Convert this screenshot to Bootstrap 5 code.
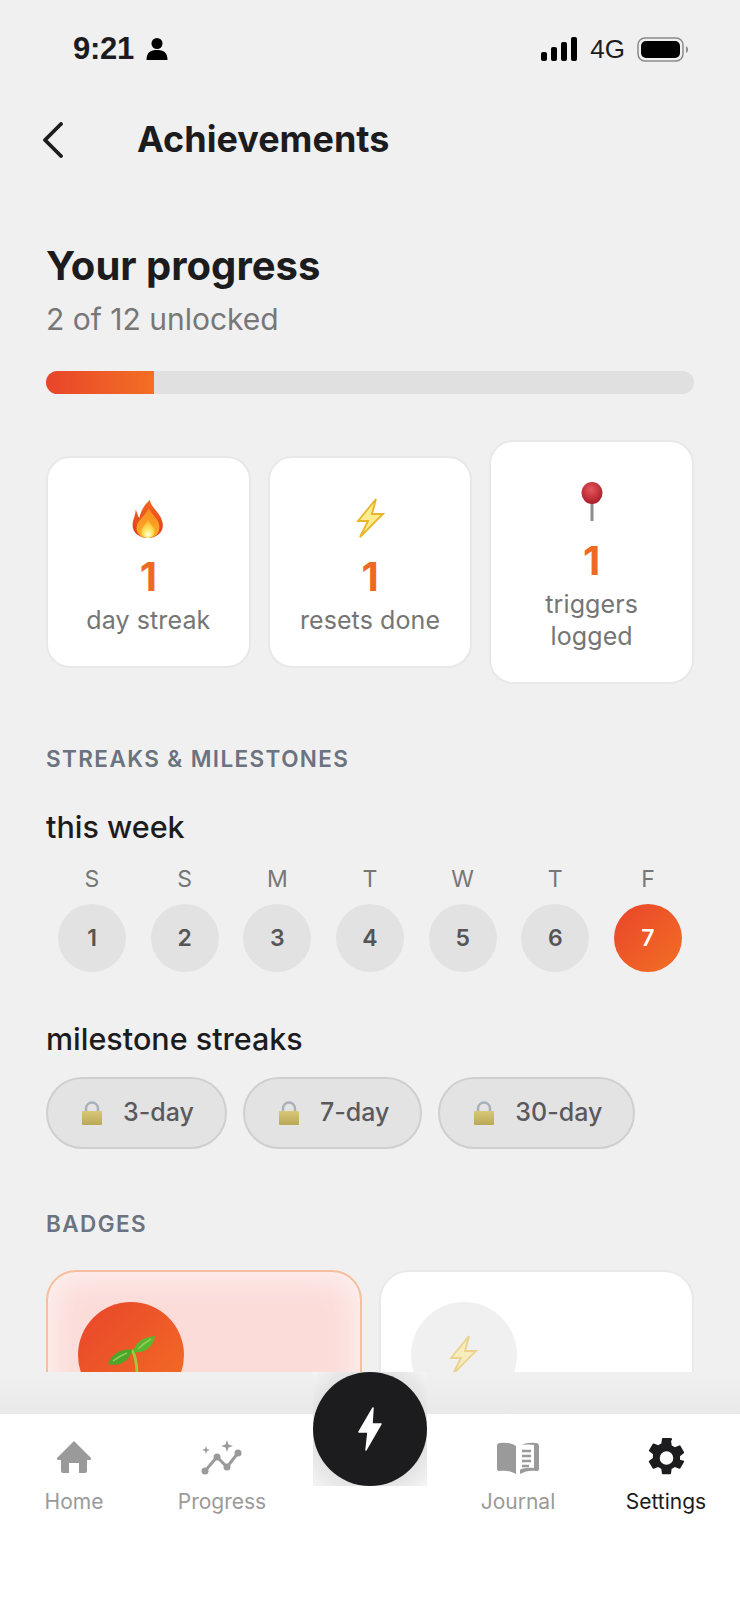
<!DOCTYPE html>
<html lang="en">
<head>
  <meta charset="UTF-8" />
  <meta name="viewport" content="width=device-width, initial-scale=1.0"/>
  <title>Achievements</title>
  <link href="https://cdn.jsdelivr.net/npm/bootstrap@5.3.3/dist/css/bootstrap.min.css" rel="stylesheet">
  <style>
    body {
      font-family: Inter, "Liberation Sans", sans-serif;
      background-color: #f0f0f0;
      color: #1c1c1e;
    }

    .app-shell { width: 740px; height: 1600px; overflow: hidden; }
    .scroll-area { height: 1372px; overflow: hidden; padding: 0 46px; }

    .status-row { height: 100px; padding: 29px 4px 0 27px; font-family: "Liberation Sans", sans-serif; }
    .status-left { gap: 12px; }
    .status-right { gap: 12px; }
    .status-time { font-size: 31px; font-weight: 700; line-height: 40px; letter-spacing: -.3px; }
    .status-net { font-size: 26px; line-height: 40px; }

    .top-row { height: 80px; margin-left: -4px; }
    .top-title { font-size: 36px; font-weight: 700; margin: 0 0 0 73px; }

    .progress-title { font-size: 40px; font-weight: 700; margin: 63px 0 0; line-height: 46px; }
    .progress-sub { font-size: 30px; color: #777; margin: 11px 0 0; line-height: 38px; }

    .prog-track { height: 23px; background: #e0e0e0; margin-top: 33px; border-radius: 12px; overflow: hidden; }
    .prog-fill { height: 100%; background: linear-gradient(90deg, #e8452b, #f36f24); }

    .stat-row { gap: 17px; margin-top: 46px; }
    .stat-box { width: 205px; background: #fff; border: 2px solid #e8e8e8; border-radius: 24px; text-align: center; padding: 40px 8px 30px; }
    .stat-num { font-size: 40px; font-weight: 700; color: #ee6a22; line-height: 44px; margin-top: 13px; }
    .stat-label { font-size: 25px; color: #757575; line-height: 32px; margin-top: 5px; letter-spacing: .1px; }
    .stat-icon { height: 44px; }

    .sect-label { font-size: 22.5px; font-weight: 600; color: #6b7280; letter-spacing: 1.4px; line-height: 28px; margin: 0; }
    .sect-first { margin-top: 61px; }
    .sect-badges { margin-top: 61px; }
    .sub-head { font-size: 30.5px; font-weight: 500; line-height: 38px; margin: 35px 0 0; }
    .sub-head-next { margin-top: 48px; }

    .week-row { margin-top: 18px; padding: 0 12px; }
    .day-col { width: 68px; text-align: center; }
    .day-letter { font-size: 23px; color: #777; line-height: 30px; margin-bottom: 10px; }
    .day-dot { width: 68px; height: 68px; border-radius: 50%; background: #e2e2e2; color: #555; font-size: 23px; font-weight: 600; }
    .day-dot-on { background: linear-gradient(135deg, #e8452b, #f36f24); color: #fff; }

    .pill-row { gap: 16px; margin-top: 19px; }
    .lock-pill { height: 72px; padding: 0 31px 0 33px; gap: 20px; background: #e3e3e3; border: 2px solid #cfcfcf; border-radius: 36px; color: #5a5a5e; font-size: 25px; font-weight: 500; }

    .badge-row { gap: 17px; margin-top: 32px; }
    .badge-box { flex: 1; height: 220px; border-radius: 30px; padding: 30px; background: #fff; border: 2px solid #e9e9e9; }
    .badge-box-on { background: #fbdcd9; border-color: #f6c09e; box-shadow: inset 0 0 30px 6px #fdf2f0; }
    .badge-disc { width: 106px; height: 106px; border-radius: 50%; background: #f0f0f0; }
    .badge-disc-on { background: linear-gradient(135deg, #e8452b, #f36f24); }

    .bottom-wrap { height: 228px; }
    .fade-band { height: 42px; background: linear-gradient(180deg, #f0f0f0, #e9e9e9); }
    .tab-bar { height: 186px; background: #fff; }
    .tab-item { width: 148px; padding-top: 24px; text-align: center; font-size: 21px; color: #9a9a9a; line-height: 28px; }
    .tab-item svg { display: block; margin: 0 auto 10px; height: 40px; }
    .tab-on { color: #1c1c1e; }

    .fab-back { position: absolute; left: 313px; top: 0; width: 114px; height: 114px; background: radial-gradient(circle, #dcdcdc 60%, #f5f5f5 100%); }
    .fab-btn { position: absolute; left: 313px; top: 0; width: 114px; height: 114px; border-radius: 50%; background: #1c1c1e; }
  </style>
</head>
<body>
  <svg width="0" height="0" class="d-block">
    <defs>
      <linearGradient id="flameOut" x1="0" y1="0" x2="0" y2="1"><stop offset="0" stop-color="#f4691f"/><stop offset="1" stop-color="#e2381c"/></linearGradient>
      <linearGradient id="flameMid" x1="0" y1="0" x2="0" y2="1"><stop offset="0" stop-color="#f98a1e"/><stop offset="1" stop-color="#fbb02a"/></linearGradient>
      <radialGradient id="flameIn" cx=".5" cy=".8" r=".75"><stop offset="0" stop-color="#fffde8"/><stop offset=".45" stop-color="#ffe45a"/><stop offset="1" stop-color="#fdb22c"/></radialGradient>
      <radialGradient id="pinHead" cx=".45" cy=".35" r=".65"><stop offset="0" stop-color="#e8565c"/><stop offset="1" stop-color="#a91c28"/></radialGradient>
      <linearGradient id="lockBody" x1="0" y1="0" x2="0" y2="1"><stop offset="0" stop-color="#d8c878"/><stop offset="1" stop-color="#b9a857"/></linearGradient>
      <symbol id="boltEmoji" viewBox="0 0 29 40">
        <path d="M20 1 L2 23 L12 23 L4 39 L27 16 L16 16 Z" fill="#fdeb8f" stroke="#e8b52a" stroke-width="1.800"/>
      </symbol>
      <symbol id="lockEmoji" viewBox="0 0 22 24">
        <path d="M5 11 V7.500 a6 6 0 0 1 12 0 V11" fill="none" stroke="#a9b0b8" stroke-width="2.400"/>
        <rect x="1" y="10" width="20" height="14" rx="1" fill="url(#lockBody)"/>
      </symbol>
    </defs>
  </svg>

  <div class="app-shell position-relative">
    <div class="scroll-area">
      <!-- status bar -->
      <div class="status-row d-flex justify-content-between align-items-start">
        <div class="status-left d-flex align-items-center">
          <span class="status-time">9:21</span>
          <svg width="22" height="24" viewBox="0 0 22 24"><circle cx="11" cy="6.500" r="5.500" fill="#000"/><path d="M0.500 23 C0.500 15 5 13 11 13 S21.500 15 21.500 23 Z" fill="#000"/></svg>
        </div>
        <div class="status-right d-flex align-items-center">
          <svg width="37" height="24" viewBox="0 0 37 24"><rect x="0" y="15" width="6" height="9" rx="2"/><rect x="10" y="10" width="6" height="14" rx="2"/><rect x="20" y="5" width="6" height="19" rx="2"/><rect x="30" y="0" width="6" height="24" rx="2"/></svg>
          <span class="status-net">4G</span>
          <svg width="53" height="25" viewBox="0 0 53 25"><rect x="1" y="1" width="45" height="23" rx="7" fill="none" stroke="#8a8a8a" stroke-width="1.500"/><rect x="4" y="4" width="39" height="17" rx="5"/><path d="M49 9 a4 4 0 0 1 0 7 Z" fill="#8a8a8a"/></svg>
        </div>
      </div>

      <!-- header -->
      <div class="top-row d-flex align-items-center">
        <svg width="22" height="36" viewBox="0 0 22 36"><path d="M19 2 L3 18 L19 34" fill="none" stroke="#1c1c1e" stroke-width="3.800" stroke-linecap="round" stroke-linejoin="round"/></svg>
        <h1 class="top-title">Achievements</h1>
      </div>

      <h2 class="progress-title">Your progress</h2>
      <p class="progress-sub">2 of 12 unlocked</p>
      <div class="prog-track"><div class="prog-fill" style="width:16.67%"></div></div>

      <!-- stats -->
      <div class="stat-row d-flex align-items-center">
        <div class="stat-box">
          <div class="stat-icon">
            <svg width="34" height="42" viewBox="0 0 36 42"><path d="M20 1 C21 9 30 13 33 23 C36 33 29 41 18 41 C7 41 0 34 2 24 C3 20 5 15 5 11 C7 15 7 18 9 20 C10 13 14 6 20 1 Z" fill="url(#flameOut)"/><path d="M19 9 C21 17 31 21 30 30 C30 37 25 41 18 41 C10 41 5 36 6 29 C7 22 15 18 19 9 Z" fill="url(#flameMid)"/><path d="M18 22 C20 27 25 29 25 34 C25 38 22 41 18 41 C13 41 11 38 11 34 C11 29 16 27 18 22 Z" fill="url(#flameIn)"/></svg>
          </div>
          <div class="stat-num">1</div>
          <div class="stat-label">day streak</div>
        </div>
        <div class="stat-box">
          <div class="stat-icon"><svg width="29" height="40"><use href="#boltEmoji"/></svg></div>
          <div class="stat-num">1</div>
          <div class="stat-label">resets done</div>
        </div>
        <div class="stat-box">
          <div class="stat-icon">
            <svg width="22" height="40" viewBox="0 0 22 40"><rect x="9.500" y="18" width="3" height="21" fill="#8d8d8d"/><ellipse cx="11" cy="11" rx="10.500" ry="11" fill="url(#pinHead)"/></svg>
          </div>
          <div class="stat-num">1</div>
          <div class="stat-label">triggers<br>logged</div>
        </div>
      </div>

      <!-- streaks -->
      <p class="sect-label sect-first">STREAKS &amp; MILESTONES</p>
      <h3 class="sub-head">this week</h3>
      <div class="week-row d-flex justify-content-between" id="week-row"></div>

      <h3 class="sub-head sub-head-next">milestone streaks</h3>
      <div class="pill-row d-flex">
        <div class="lock-pill d-flex align-items-center"><svg width="22" height="24"><use href="#lockEmoji"/></svg>3-day</div>
        <div class="lock-pill d-flex align-items-center"><svg width="22" height="24"><use href="#lockEmoji"/></svg>7-day</div>
        <div class="lock-pill d-flex align-items-center"><svg width="22" height="24"><use href="#lockEmoji"/></svg>30-day</div>
      </div>

      <!-- badges -->
      <p class="sect-label sect-badges">BADGES</p>
      <div class="badge-row d-flex">
        <div class="badge-box badge-box-on">
          <div class="badge-disc badge-disc-on d-flex align-items-center justify-content-center">
            <svg width="48" height="40" viewBox="0 0 48 40"><path d="M25 15 C29 22 30 30 30 40" fill="none" stroke="#9ccc3c" stroke-width="2.800"/><path d="M27 17 C26 9 36 2 48 1 C47 11 38 19 27 17 Z" fill="#5cb531"/><path d="M25 15 C16 13 5 18 1 29 C12 32 22 27 25 15 Z" fill="#4ea52a"/><path d="M31 14 C35 10 39 7 44 4 M6 26 C11 22 15 20 20 18" fill="none" stroke="#8ed05a" stroke-width="1.500"/></svg>
          </div>
        </div>
        <div class="badge-box">
          <div class="badge-disc d-flex align-items-center justify-content-center">
            <svg width="33" height="40" class="opacity-50"><use href="#boltEmoji"/></svg>
          </div>
        </div>
      </div>
    </div>

    <!-- bottom navigation -->
    <div class="bottom-wrap position-relative">
      <div class="fade-band"></div>
      <div class="tab-bar d-flex">
        <div class="tab-item">
          <svg width="36" height="40" viewBox="0 0 36 40"><path d="M18 3 L35 20 Q35.500 22 33 22 L31 22 L31 33 Q31 35 29 35 L23 35 L23 25 L13 25 L13 35 L7 35 Q5 35 5 33 L5 22 L3 22 Q0.500 22 1 20 Z" fill="#9a9a9a"/></svg>
          Home
        </div>
        <div class="tab-item">
          <svg width="44" height="40" viewBox="0 0 44 40"><path d="M5 33 L17 19 L27 29 L38 15" fill="none" stroke="#9a9a9a" stroke-width="3"/><circle cx="5" cy="33" r="3.500" fill="#9a9a9a"/><circle cx="17" cy="19" r="3.500" fill="#9a9a9a"/><circle cx="27" cy="29" r="3.500" fill="#9a9a9a"/><circle cx="38" cy="15" r="3.500" fill="#9a9a9a"/><path d="M27 2 L28.500 6.500 L33 8 L28.500 9.500 L27 14 L25.500 9.500 L21 8 L25.500 6.500 Z" fill="#9a9a9a"/><path d="M6 8 L7 11 L10 12 L7 13 L6 16 L5 13 L2 12 L5 11 Z" fill="#9a9a9a"/></svg>
          Progress
        </div>
        <div class="tab-item"></div>
        <div class="tab-item">
          <svg width="44" height="40" viewBox="0 0 44 40"><path d="M1 8 Q1 5 4 5 C10 4 16 5 20 8 L20 36 C15 33 9 32 4 33 Q1 33 1 31 Z" fill="#9a9a9a"/><path d="M43 8 Q43 5 40 5 C34 4 28 5 24 8 L24 36 C29 33 35 32 40 33 Q43 33 43 31 Z" fill="#9a9a9a"/><path d="M21 9 C25 6 32 6 38 7 L38 30 C32 29 26 30 21 33 Z" fill="#fff"/><path d="M26 13 H35 M26 18 H35 M26 23 H35 M26 28 H33" stroke="#9a9a9a" stroke-width="2.400" fill="none"/></svg>
          Journal
        </div>
        <div class="tab-item tab-on">
          <svg width="37" height="40" viewBox="2.500 1.400 19 21.200"><path fill="#1c1c1e" d="M19.140 12.940c.04-.3.06-.61.06-.94s-.02-.64-.07-.94l2.030-1.580a.49.49 0 0 0 .12-.61l-1.920-3.320a.49.49 0 0 0-.59-.22l-2.390.96c-.5-.38-1.030-.7-1.620-.94l-.36-2.540A.48.48 0 0 0 13.920 1.400h-3.840c-.24 0-.43.17-.47.41l-.36 2.540c-.59.24-1.130.57-1.620.94l-2.390-.96a.48.48 0 0 0-.59.22L2.730 7.870a.48.48 0 0 0 .12.61l2.030 1.580c-.05.3-.09.63-.09.94s.02.64.07.94l-2.030 1.580a.49.49 0 0 0-.12.61l1.920 3.320c.12.22.37.29.59.22l2.390-.96c.5.38 1.030.7 1.620.94l.36 2.540c.05.24.24.41.48.41h3.840c.24 0 .44-.17.47-.41l.36-2.540c.59-.24 1.130-.56 1.620-.94l2.390.96c.22.08.47 0 .59-.22l1.920-3.320a.48.48 0 0 0-.12-.61zM12 15.600a3.600 3.600 0 1 1 0-7.200 3.600 3.600 0 0 1 0 7.200z"/></svg>
          Settings
        </div>
      </div>
      <div class="fab-back"></div>
      <div class="fab-btn d-flex align-items-center justify-content-center">
        <svg width="26" height="44" viewBox="0 0 26 44"><path d="M16 1 L2 25 L11 25 L9 43 L24 17 L15 17 Z" fill="#fff" stroke="#fff" stroke-width="1.500" stroke-linejoin="round"/></svg>
      </div>
    </div>
  </div>

  <script src="https://cdn.jsdelivr.net/npm/bootstrap@5.3.3/dist/js/bootstrap.bundle.min.js"></script>
  <script>
    // week strip, last day is today
    const days = ['S', 'S', 'M', 'T', 'W', 'T', 'F'];
    document.getElementById('week-row').innerHTML = days.map((d, i) => `
      <div class="day-col">
        <div class="day-letter">${d}</div>
        <div class="day-dot d-flex align-items-center justify-content-center ${i === 6 ? 'day-dot-on' : ''}">${i + 1}</div>
      </div>`).join('');
  </script>
</body>
</html>
